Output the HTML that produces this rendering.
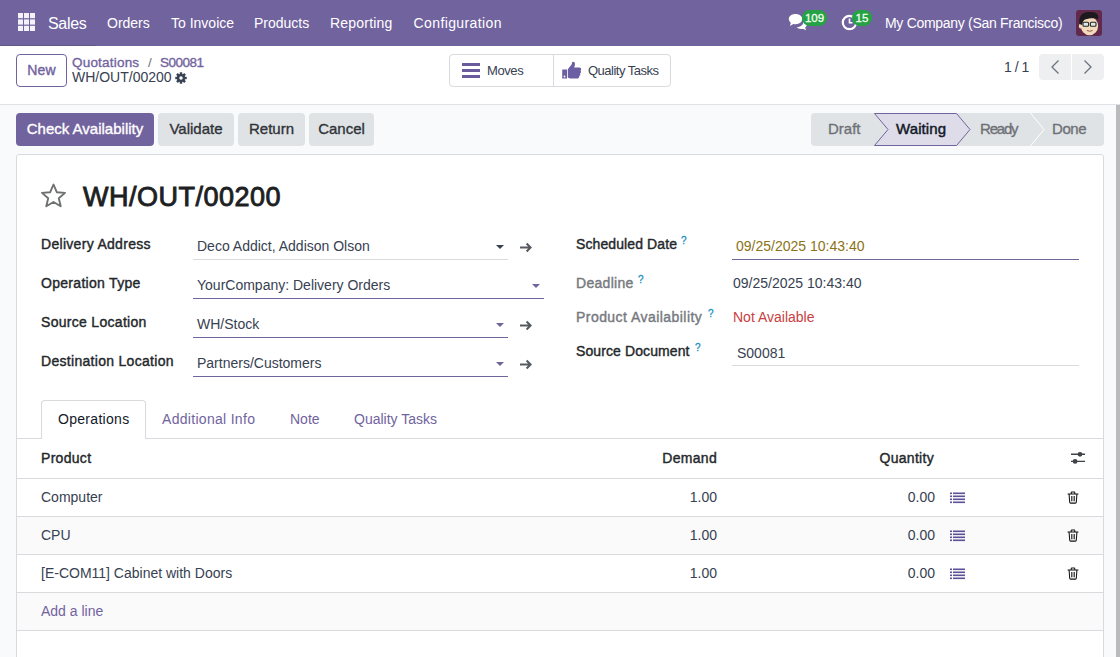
<!DOCTYPE html>
<html><head><meta charset="utf-8">
<style>
*{box-sizing:border-box;margin:0;padding:0}
html,body{width:1120px;height:657px;overflow:hidden;background:#f9fafb;font-family:"Liberation Sans",sans-serif;font-size:14px;color:#374151}
.a{position:absolute;white-space:nowrap}
.t{position:absolute;white-space:nowrap;line-height:20px;height:20px}
#nav{position:absolute;left:0;top:0;width:1120px;height:46px;background:#71639e}
#nav .t{color:#fff}
#cp{position:absolute;left:0;top:46px;width:1120px;height:59px;background:#fff;border-bottom:1px solid #dee2e6}
.btn{position:absolute;border-radius:4px;text-align:center}
#sheet{position:absolute;left:16px;top:154px;width:1088px;height:520px;background:#fff;border:1px solid #d8dadd;border-radius:3px}
.lbl{color:#24272b;-webkit-text-stroke:0.4px #24272b;letter-spacing:0.3px}
.ul{position:absolute;height:1px;background:#d8dadd}
.ulr{position:absolute;height:1px;background:#71639e}
.caret{position:absolute;width:0;height:0;border-left:4px solid transparent;border-right:4px solid transparent;border-top:4px solid #374151}
.caretp{border-top-color:#71639e}
.q{position:absolute;font-size:10px;color:#1b8fc2;line-height:10px;-webkit-text-stroke:0.3px #1b8fc2}
.rowline{position:absolute;left:16px;width:1088px;height:1px;background:#d8dadd}
</style></head><body>

<!-- NAVBAR -->
<div id="nav">
  <div class="a" style="left:0;top:45px;width:96px;height:1px;background:rgba(0,0,0,0.12)"></div>
  <svg class="a" style="left:18px;top:13px" width="17" height="18" viewBox="0 0 17 18" fill="#f4f1f9"><rect x="0" y="0" width="5" height="5.2"/><rect x="6" y="0" width="5" height="5.2"/><rect x="12" y="0" width="5" height="5.2"/><rect x="0" y="6.4" width="5" height="5.2"/><rect x="6" y="6.4" width="5" height="5.2"/><rect x="12" y="6.4" width="5" height="5.2"/><rect x="0" y="12.8" width="5" height="5.2"/><rect x="6" y="12.8" width="5" height="5.2"/><rect x="12" y="12.8" width="5" height="5.2"/></svg>
  <div class="t" style="left:48px;top:14px;font-size:16px;line-height:20px;letter-spacing:-0.3px">Sales</div>
  <div class="t" style="left:107px;top:13px">Orders</div>
  <div class="t" style="left:171px;top:13px">To Invoice</div>
  <div class="t" style="left:254px;top:13px">Products</div>
  <div class="t" style="left:330px;top:13px;letter-spacing:0.2px">Reporting</div>
  <div class="t" style="left:413.5px;top:13px;letter-spacing:0.4px">Configuration</div>
  <div class="t" style="left:885px;top:13px;letter-spacing:-0.3px">My Company (San Francisco)</div>

  <!-- chat icon -->
  <svg class="a" style="left:788px;top:13px" width="20" height="18" viewBox="0 0 20 18">
    <path fill="#fff" d="M7.5 1C3.6 1 .8 3.2 .8 6c0 1.5.8 2.800 2 3.700L2 13l3.300-2.100c.7.200 1.400.300 2.200.300 3.900 0 6.700-2.200 6.700-5.100S11.400 1 7.500 1z"/>
    <path fill="#fff" d="M15.500 7.500c.1.300.1.600.1.900 0 3.300-3.200 5.700-7 5.900 1.100 1 2.700 1.600 4.500 1.600.6 0 1.200-.1 1.800-.2L18 17.300l-.8-2.800c1.100-.8 1.800-1.900 1.800-3.200 0-1.600-1.300-3-3.500-3.800z"/>
  </svg>
  <div class="a" style="left:802px;top:9.5px;width:25px;height:16.5px;border-radius:8.5px;background:#25a244;color:#f4fff4;font-size:11.5px;-webkit-text-stroke:0.3px #f4fff4;text-align:center;line-height:16.5px">109</div>
  <!-- clock icon -->
  <svg class="a" style="left:841px;top:14px" width="17" height="17" viewBox="0 0 17 17">
    <circle cx="8.5" cy="8.5" r="6.7" fill="none" stroke="#fff" stroke-width="2.2"/>
    <path d="M8.5 4.500V8.700H11.500" fill="none" stroke="#fff" stroke-width="1.6"/>
  </svg>
  <div class="a" style="left:852px;top:10px;width:20px;height:16px;border-radius:8px;background:#25a244;color:#f4fff4;font-size:11.5px;-webkit-text-stroke:0.3px #f4fff4;text-align:center;line-height:16px">15</div>
  <!-- avatar -->
  <svg class="a" style="left:1076px;top:10px" width="26" height="26" viewBox="0 0 26 26">
    <rect x="0" y="0" width="26" height="26" rx="3" fill="#62294a"/>
    <ellipse cx="13.5" cy="16" rx="8.600" ry="9.300" fill="#f4d9bd"/>
    <ellipse cx="4.800" cy="16" rx="2" ry="2.600" fill="#f4d9bd"/>
    <path d="M3.500 14C2.500 6 6 2 13 2 20 1.500 23.500 4 22 9.500 19.500 7.500 14 8 9 9.500 7.500 10.500 6.500 12 6 15z" fill="#1c1a1e"/>
    <rect x="7" y="12.300" width="5.600" height="4" rx="1" fill="#dfe7ea" stroke="#1f2a22" stroke-width="1.100"/>
    <rect x="14.400" y="12.300" width="5.600" height="4" rx="1" fill="#dfe7ea" stroke="#1f2a22" stroke-width="1.100"/>
    <path d="M11 20.500q2.700 1.600 5.500 0" fill="none" stroke="#8a5a44" stroke-width="1"/>
  </svg>
</div>

<!-- CONTROL PANEL -->
<div id="cp">
  <div class="btn" style="left:16px;top:8px;width:51px;height:33px;border:1px solid #71639e;color:#71639e;-webkit-text-stroke:0.4px #71639e;letter-spacing:0.2px;line-height:31px">New</div>
  <div class="t" style="left:72px;top:7px;font-size:13.5px;color:#71639e;-webkit-text-stroke:0.35px #71639e;letter-spacing:0.2px">Quotations</div>
  <div class="t" style="left:148px;top:7px;font-size:13.5px;color:#6b6f76">/</div>
  <div class="t" style="left:160px;top:7px;font-size:13.5px;color:#71639e;-webkit-text-stroke:0.35px #71639e;letter-spacing:-0.5px">S00081</div>
  <div class="t" style="left:72px;top:21px;color:#374151">WH/OUT/00200</div>

  <!-- gear -->
  <svg class="a" style="left:175px;top:26px" width="12" height="12" viewBox="-6.5 -6.5 13 13">
    <g fill="#374151"><circle r="4.4"/><rect x="-1.3" y="-6.2" width="2.6" height="12.4"/><rect x="-1.3" y="-6.2" width="2.6" height="12.4" transform="rotate(45)"/><rect x="-1.3" y="-6.2" width="2.6" height="12.4" transform="rotate(90)"/><rect x="-1.3" y="-6.2" width="2.6" height="12.4" transform="rotate(135)"/></g>
    <circle r="1.9" fill="#fff"/>
  </svg>
  <!-- button group -->
  <div class="a" style="left:449px;top:8px;width:222px;height:33px;border:1px solid #d8dadd;border-radius:4px;background:#fff"></div>
  <div class="a" style="left:553px;top:8px;width:1px;height:33px;background:#d8dadd"></div>
  <svg class="a" style="left:462px;top:17px" width="18" height="15" viewBox="0 0 18 15" fill="#6a5c9c">
    <rect x="0" y="0" width="18" height="3"/><rect x="0" y="6" width="18" height="3"/><rect x="0" y="12" width="18" height="3"/>
  </svg>
  <div class="t" style="left:487px;top:15px;font-size:13px;letter-spacing:-0.4px">Moves</div>
  <svg class="a" style="left:561px;top:15px" width="21" height="18" viewBox="0 0 21 18" fill="#6c5ea3">
    <path d="M1.200 8.500H6V17.500H1.200z"/>
    <path d="M6.800 8.200 10.400 3.800C11 2.800 11 1.600 11.300.9 12.800.5 14 1.400 14 3 14 4.200 13.600 5.400 13.100 6.500H18.300C19.400 6.500 20.200 7.300 20.200 8.300 20.200 8.900 19.900 9.400 19.500 9.800 19.800 10.100 20 10.600 20 11.100 20 11.800 19.600 12.300 19 12.600 19.200 12.900 19.300 13.200 19.300 13.600 19.300 14.300 18.800 14.900 18.100 15.100 18.200 15.300 18.200 15.500 18.200 15.700 18.200 16.600 17.400 17.500 16.300 17.500H10.500C9 17.500 7.900 17.200 6.800 16.500z"/>
    <circle cx="3.500" cy="15.500" r=".9" fill="#fff"/>
  </svg>
  <div class="t" style="left:588px;top:15px;font-size:13px;letter-spacing:-0.5px">Quality Tasks</div>
  <!-- pager -->
  <div class="t" style="left:1004px;top:11px;letter-spacing:-0.5px">1 / 1</div>
  <div class="a" style="left:1039px;top:8px;width:32px;height:26px;background:#eeeff1;border-radius:4px 0 0 4px"></div>
  <div class="a" style="left:1072px;top:8px;width:32px;height:26px;background:#eeeff1;border-radius:0 4px 4px 0"></div>
  <svg class="a" style="left:1050px;top:14px" width="10" height="14" viewBox="0 0 10 14"><path d="M8.500 .5 2 7l6.500 6.500" fill="none" stroke="#6b7280" stroke-width="1.300"/></svg>
  <svg class="a" style="left:1083px;top:14px" width="10" height="14" viewBox="0 0 10 14"><path d="M1.500 .5 8 7l-6.500 6.500" fill="none" stroke="#6b7280" stroke-width="1.300"/></svg>
</div>

<!-- ACTION BAR -->
<div class="btn" style="left:16px;top:113px;width:138px;height:33px;background:#71639e;color:#fff;font-size:15px;line-height:31px;-webkit-text-stroke:0.35px #fff">Check Availability</div>
<div class="btn" style="left:158px;top:113px;width:76px;height:33px;background:#e0e3e6;color:#2f3338;font-size:15px;line-height:31px;-webkit-text-stroke:0.35px #2f3338">Validate</div>
<div class="btn" style="left:238px;top:113px;width:67px;height:33px;background:#e0e3e6;color:#2f3338;font-size:15px;line-height:31px;-webkit-text-stroke:0.35px #2f3338">Return</div>
<div class="btn" style="left:309px;top:113px;width:65px;height:33px;background:#e0e3e6;color:#2f3338;font-size:15px;line-height:31px;-webkit-text-stroke:0.35px #2f3338">Cancel</div>


<!-- STATUS BAR -->
<div class="a" style="left:811px;top:113px;width:293px;height:33px;background:#e0e3e6;border-radius:4px"></div>
<svg class="a" style="left:811px;top:113px" width="293" height="33" viewBox="0 0 293 33">
  <path d="M63.500 .5H145.500L159 16.500 145.500 32.500H63.500L77 16.500z" fill="#dedce8" stroke="#71639e" stroke-width="1"/>
  <path d="M219.500 0 233 16.500 219.500 33" fill="none" stroke="#fff" stroke-width="1"/>
</svg>
<div class="t" style="left:828px;top:119px;font-size:15px;color:#6e7176;-webkit-text-stroke:0.35px #6e7176">Draft</div>
<div class="t" style="left:896px;top:119px;font-size:15px;color:#111827;-webkit-text-stroke:0.45px #111827;letter-spacing:0.1px">Waiting</div>
<div class="t" style="left:980px;top:119px;font-size:15px;color:#6e7176;-webkit-text-stroke:0.35px #6e7176;letter-spacing:-1.2px">Ready</div>
<div class="t" style="left:1052px;top:119px;font-size:15px;color:#6e7176;-webkit-text-stroke:0.35px #6e7176;letter-spacing:-0.4px">Done</div>
<!-- scrollbar -->
<div class="a" style="left:1116px;top:105px;width:4px;height:552px;background:#bbbbbb"></div>

<!-- SHEET -->

<div id="sheet"></div>
<!-- star -->
<svg class="a" style="left:40px;top:183px" width="27" height="25" viewBox="0 0 27 25">
  <path d="M13.500 1.500 16.800 9.200 25 9.900 18.800 15.300 20.700 23.300 13.500 19 6.300 23.300 8.200 15.300 2 9.900 10.200 9.200z" fill="none" stroke="#6f7072" stroke-width="1.900" stroke-linejoin="round"/>
</svg>
<div class="t" style="left:83px;top:181px;height:32px;line-height:32px;font-size:27px;color:#1d1f23;-webkit-text-stroke:0.9px #1d1f23;letter-spacing:0.5px">WH/OUT/00200</div>

<!-- left fields -->
<div class="t lbl" style="left:41px;top:234px">Delivery Address</div>
<div class="t lbl" style="left:41px;top:273px">Operation Type</div>
<div class="t lbl" style="left:41px;top:312px">Source Location</div>
<div class="t lbl" style="left:41px;top:351px">Destination Location</div>

<div class="t" style="left:197px;top:236px">Deco Addict, Addison Olson</div>
<div class="ul" style="left:193px;top:259px;width:315px"></div>
<div class="caret" style="left:496px;top:245px"></div>
<svg class="a" style="left:519px;top:241.5px" width="14" height="11" viewBox="0 0 14 11"><path d="M1 5.500H11.600M7.600 1.600 11.500 5.500 7.600 9.400" fill="none" stroke="#565b61" stroke-width="2.100"/></svg>

<div class="t" style="left:197px;top:275px">YourCompany: Delivery Orders</div>
<div class="ulr" style="left:193px;top:298px;width:351px"></div>
<div class="caret caretp" style="left:532px;top:284px"></div>

<div class="t" style="left:197px;top:314px">WH/Stock</div>
<div class="ulr" style="left:193px;top:337px;width:315px"></div>
<div class="caret caretp" style="left:496px;top:323px"></div>
<svg class="a" style="left:519px;top:319.5px" width="14" height="11" viewBox="0 0 14 11"><path d="M1 5.500H11.600M7.600 1.600 11.500 5.500 7.600 9.400" fill="none" stroke="#565b61" stroke-width="2.100"/></svg>

<div class="t" style="left:197px;top:353px">Partners/Customers</div>
<div class="ulr" style="left:193px;top:376px;width:315px"></div>
<div class="caret caretp" style="left:496px;top:362px"></div>
<svg class="a" style="left:519px;top:358.5px" width="14" height="11" viewBox="0 0 14 11"><path d="M1 5.500H11.600M7.600 1.600 11.500 5.500 7.600 9.400" fill="none" stroke="#565b61" stroke-width="2.100"/></svg>

<!-- right fields -->
<div class="t lbl" style="left:576px;top:234px;letter-spacing:0.1px">Scheduled Date</div>
<div class="q" style="left:681px;top:236px">?</div>
<div class="t" style="left:736px;top:236px;color:#8c7218">09/25/2025 10:43:40</div>
<div class="ulr" style="left:732px;top:259px;width:347px"></div>

<div class="t" style="left:576px;top:273px;color:#76797e;-webkit-text-stroke:0.4px #76797e;letter-spacing:0.3px">Deadline</div>
<div class="q" style="left:638px;top:275px">?</div>
<div class="t" style="left:733px;top:273px">09/25/2025 10:43:40</div>

<div class="t" style="left:576px;top:307px;color:#76797e;-webkit-text-stroke:0.4px #76797e;letter-spacing:0.45px">Product Availability</div>
<div class="q" style="left:708px;top:309px">?</div>
<div class="t" style="left:733px;top:307px;color:#c8403f">Not Available</div>

<div class="t lbl" style="left:576px;top:341px;letter-spacing:0.1px">Source Document</div>
<div class="q" style="left:695px;top:343px">?</div>
<div class="t" style="left:737px;top:343px">S00081</div>
<div class="ul" style="left:732px;top:365px;width:347px"></div>

<!-- tabs -->
<div class="a" style="left:41px;top:400px;width:105px;height:39px;background:#fff;border:1px solid #d8dadd;border-bottom:none;border-radius:4px 4px 0 0"></div>
<div class="rowline" style="top:438px;left:17px;width:24px"></div>
<div class="rowline" style="top:438px;left:146px;width:957px"></div>
<div class="t" style="left:58px;top:409px;color:#111827;letter-spacing:0.3px">Operations</div>
<div class="t" style="left:162px;top:409px;color:#71639e;letter-spacing:0.3px">Additional Info</div>
<div class="t" style="left:290px;top:409px;color:#71639e">Note</div>
<div class="t" style="left:354px;top:409px;color:#71639e">Quality Tasks</div>

<!-- table -->
<div class="t lbl" style="left:41px;top:448px">Product</div>
<div class="t lbl" style="left:617px;width:100px;text-align:right;top:448px">Demand</div>
<div class="t lbl" style="left:834px;width:100px;text-align:right;top:448px">Quantity</div>
<svg class="a" style="left:1070px;top:450px" width="16" height="16" viewBox="0 0 16 16">
  <path d="M1 4.300H15M1 11.400H15" stroke="#3f4246" stroke-width="1.400"/>
  <circle cx="10" cy="4.300" r="2.400" fill="#3f4246"/><circle cx="5.100" cy="11.400" r="2.400" fill="#3f4246"/>
</svg>
<div class="rowline" style="top:478px;left:17px;width:1086px"></div>

<div class="a" style="left:17px;top:517px;width:1086px;height:37px;background:#fafafb"></div>
<div class="a" style="left:17px;top:593px;width:1086px;height:37px;background:#fafafb"></div>
<div class="rowline" style="top:516px;left:17px;width:1086px"></div>
<div class="rowline" style="top:554px;left:17px;width:1086px"></div>
<div class="rowline" style="top:592px;left:17px;width:1086px"></div>
<div class="rowline" style="top:630px;left:17px;width:1086px"></div>

<div class="t" style="left:41px;top:487px">Computer</div>
<div class="t" style="left:41px;top:525px">CPU</div>
<div class="t" style="left:41px;top:563px">[E-COM11] Cabinet with Doors</div>
<div class="t" style="left:41px;top:601px;color:#71639e">Add a line</div>
<div class="t" style="left:617px;width:100px;text-align:right;top:487px">1.00</div>
<div class="t" style="left:835px;width:100px;text-align:right;top:487px">0.00</div>
<svg class="a" style="left:950px;top:492px" width="15" height="12" viewBox="0 0 15 12" fill="#5b5196"><rect x="0" y=".5" width="2" height="1.600"/><rect x="3" y=".5" width="12" height="1.600"/><rect x="0" y="3.500" width="2" height="1.600"/><rect x="3" y="3.500" width="12" height="1.600"/><rect x="0" y="6.500" width="2" height="1.600"/><rect x="3" y="6.500" width="12" height="1.600"/><rect x="0" y="9.500" width="2" height="1.600"/><rect x="3" y="9.500" width="12" height="1.600"/></svg>
<svg class="a" style="left:1067px;top:491px" width="12" height="13" viewBox="0 0 12 13"><path d="M.6 3H11.4M4.200 3V1.700Q4.200 1 4.900 1H7.100Q7.800 1 7.800 1.700V3M2.100 3.300 2.700 11.300Q2.800 12.100 3.600 12.100H8.400Q9.200 12.100 9.300 11.300L9.900 3.300" fill="none" stroke="#111" stroke-width="1.050"/><path d="M4.500 5V10.300M6 5V10.300M7.500 5V10.300" stroke="#111" stroke-width=".75"/></svg>
<div class="t" style="left:617px;width:100px;text-align:right;top:525px">1.00</div>
<div class="t" style="left:835px;width:100px;text-align:right;top:525px">0.00</div>
<svg class="a" style="left:950px;top:530px" width="15" height="12" viewBox="0 0 15 12" fill="#5b5196"><rect x="0" y=".5" width="2" height="1.600"/><rect x="3" y=".5" width="12" height="1.600"/><rect x="0" y="3.500" width="2" height="1.600"/><rect x="3" y="3.500" width="12" height="1.600"/><rect x="0" y="6.500" width="2" height="1.600"/><rect x="3" y="6.500" width="12" height="1.600"/><rect x="0" y="9.500" width="2" height="1.600"/><rect x="3" y="9.500" width="12" height="1.600"/></svg>
<svg class="a" style="left:1067px;top:529px" width="12" height="13" viewBox="0 0 12 13"><path d="M.6 3H11.4M4.200 3V1.700Q4.200 1 4.900 1H7.100Q7.800 1 7.800 1.700V3M2.100 3.300 2.700 11.300Q2.800 12.100 3.600 12.100H8.400Q9.200 12.100 9.300 11.300L9.900 3.300" fill="none" stroke="#111" stroke-width="1.050"/><path d="M4.500 5V10.300M6 5V10.300M7.500 5V10.300" stroke="#111" stroke-width=".75"/></svg>
<div class="t" style="left:617px;width:100px;text-align:right;top:563px">1.00</div>
<div class="t" style="left:835px;width:100px;text-align:right;top:563px">0.00</div>
<svg class="a" style="left:950px;top:568px" width="15" height="12" viewBox="0 0 15 12" fill="#5b5196"><rect x="0" y=".5" width="2" height="1.600"/><rect x="3" y=".5" width="12" height="1.600"/><rect x="0" y="3.500" width="2" height="1.600"/><rect x="3" y="3.500" width="12" height="1.600"/><rect x="0" y="6.500" width="2" height="1.600"/><rect x="3" y="6.500" width="12" height="1.600"/><rect x="0" y="9.500" width="2" height="1.600"/><rect x="3" y="9.500" width="12" height="1.600"/></svg>
<svg class="a" style="left:1067px;top:567px" width="12" height="13" viewBox="0 0 12 13"><path d="M.6 3H11.4M4.200 3V1.700Q4.200 1 4.900 1H7.100Q7.800 1 7.800 1.700V3M2.100 3.300 2.700 11.300Q2.800 12.100 3.600 12.100H8.400Q9.200 12.100 9.300 11.300L9.900 3.300" fill="none" stroke="#111" stroke-width="1.050"/><path d="M4.500 5V10.300M6 5V10.300M7.500 5V10.300" stroke="#111" stroke-width=".75"/></svg>


</body></html>
